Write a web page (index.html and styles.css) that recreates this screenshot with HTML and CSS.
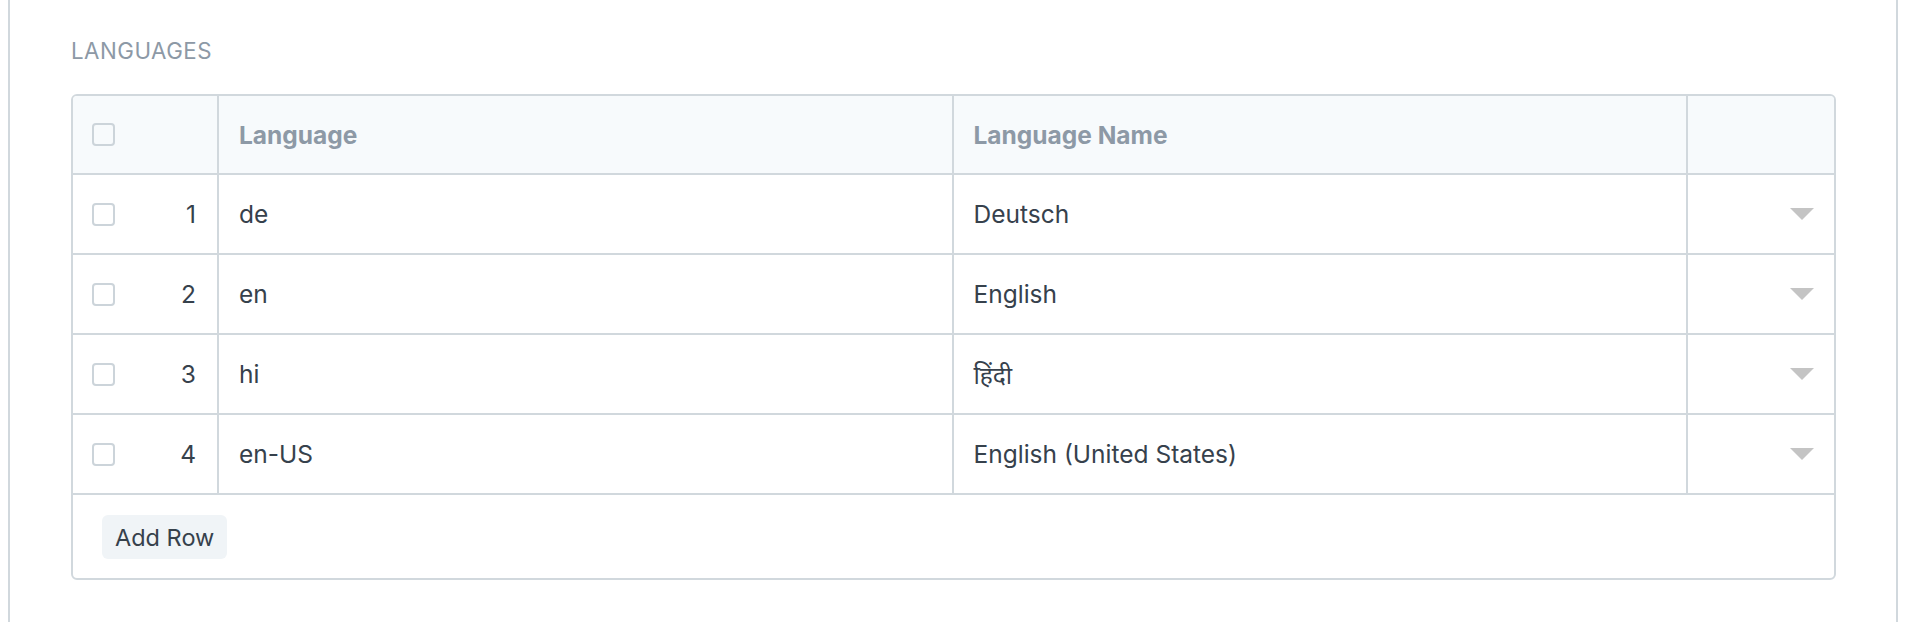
FILE: index.html
```html
<!DOCTYPE html>
<html lang="en">
<head>
<meta charset="utf-8">
<title>Languages</title>
<link rel="stylesheet" href="styles.css">
</head>
<body>
<div class="page">
  <div class="section">
    <div class="section-head">LANGUAGES</div>
    <div class="grid">
      <div class="row head">
        <div class="cell idx"><span class="check"></span></div>
        <div class="cell">Language</div>
        <div class="cell">Language Name</div>
        <div class="cell last"></div>
      </div>
      <div class="row">
        <div class="cell idx"><span class="check"></span><span class="num">1</span></div>
        <div class="cell">de</div>
        <div class="cell">Deutsch</div>
        <div class="cell last"><span class="caret"></span></div>
      </div>
      <div class="row">
        <div class="cell idx"><span class="check"></span><span class="num">2</span></div>
        <div class="cell">en</div>
        <div class="cell">English</div>
        <div class="cell last"><span class="caret"></span></div>
      </div>
      <div class="row">
        <div class="cell idx"><span class="check"></span><span class="num">3</span></div>
        <div class="cell">hi</div>
        <div class="cell hindi">हिंदी</div>
        <div class="cell last"><span class="caret"></span></div>
      </div>
      <div class="row">
        <div class="cell idx"><span class="check"></span><span class="num">4</span></div>
        <div class="cell">en-US</div>
        <div class="cell">English (United States)</div>
        <div class="cell last"><span class="caret"></span></div>
      </div>
      <div class="footer">
        <button class="btn" type="button">Add Row</button>
      </div>
    </div>
  </div>
</div>
</body>
</html>
```

FILE: styles.css
```css
html, body {
  margin: 0;
  padding: 0;
  background: #ffffff;
}
body {
  font-family: Inter, "Noto Sans", "Noto Sans Devanagari", "Lohit Devanagari", "FreeSans", "DejaVu Sans", sans-serif;
  color: #36414c;
  font-size: 24.5px;
}
.page {
  padding: 0 14px 0 8px;
  height: 622px;
  box-sizing: border-box;
}
.section {
  height: 100%;
  box-sizing: border-box;
  border-left: 2px solid #d1d8dd;
  border-right: 2px solid #d1d8dd;
  padding: 34px 60px 0 61px;
}
.section-head {
  font-size: 22.3px;
  line-height: 34px;
  color: #8d99a6;
  letter-spacing: 0.5px;
  margin-bottom: 26px;
}
.grid {
  border: 2px solid #d1d8dd;
  border-radius: 6px;
  overflow: hidden;
}
.row {
  display: grid;
  grid-template-columns: 146px 1fr 1fr 146px;
  height: 80px;
  box-sizing: border-box;
  border-bottom: 2px solid #d1d8dd;
}
.row.head {
  height: 79px;
  background: #f7fafc;
  color: #8d99a6;
  font-weight: 700;
}
.cell {
  border-right: 2px solid #d1d8dd;
  display: flex;
  align-items: center;
  padding: 0 20px;
  min-width: 0;
}
.cell.last {
  border-right: none;
  justify-content: flex-end;
  padding: 0 20px;
}
.cell.idx {
  padding: 0 21px 0 19px;
  justify-content: space-between;
}
.check {
  width: 23px;
  height: 23px;
  box-sizing: border-box;
  border: 2px solid #ccd4da;
  border-radius: 4px;
  background: #ffffff;
}
.head .check {
  background: transparent;
}
.caret {
  width: 0;
  height: 0;
  border-left: 12px solid transparent;
  border-right: 12px solid transparent;
  border-top: 12px solid #c4c4c4;
}
.footer {
  padding: 20px 29px 19px;
}
.btn {
  font-family: inherit;
  font-size: 23.5px;
  color: #36414c;
  background: #f0f4f7;
  border: none;
  border-radius: 6px;
  height: 44px;
  padding: 0 13px;
  display: block;
}
```
